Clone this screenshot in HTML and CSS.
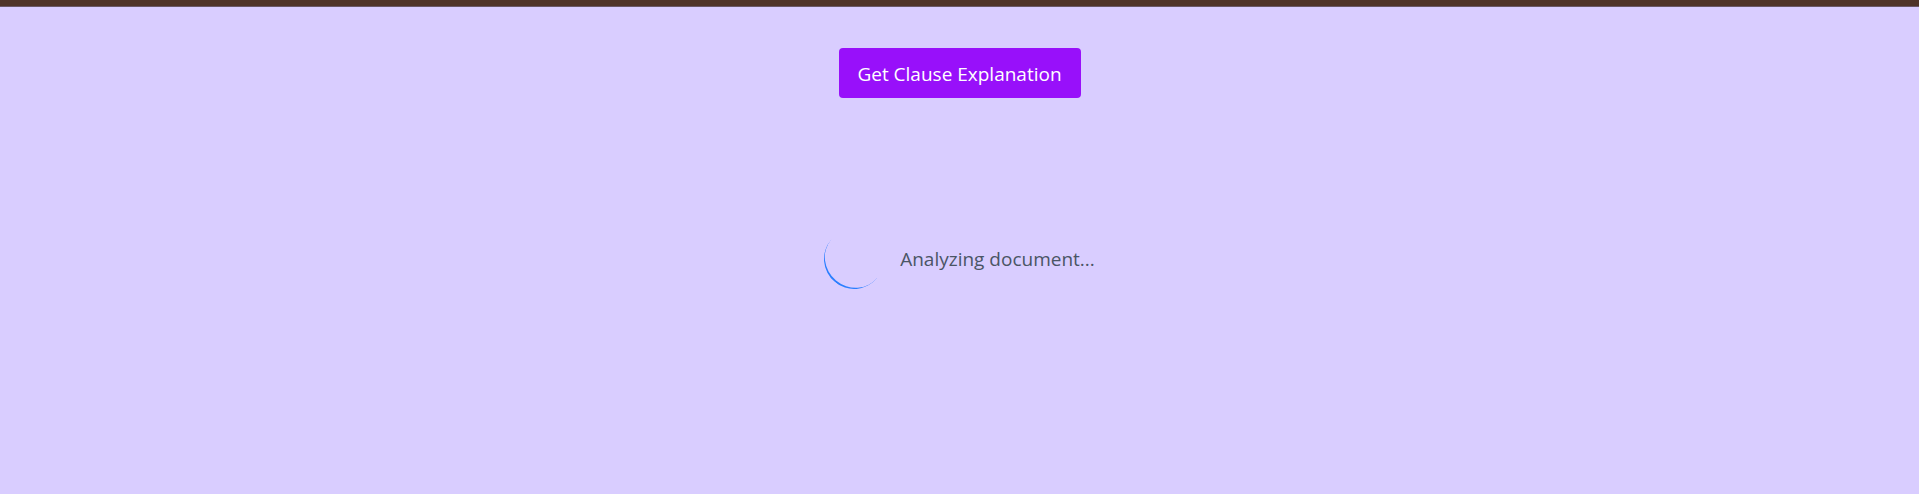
FILE: index.html
```html
<!DOCTYPE html>
<html lang="en">
<head>
<meta charset="utf-8">
<title>Clause Explanation</title>
<link rel="stylesheet" href="styles.css">
</head>
<body>
  <div class="topbar"></div>
  <main class="main">
    <div class="actions">
      <button class="btn-primary" type="button">Get Clause Explanation</button>
    </div>
    <div class="loading">
      <div class="spinner"></div>
      <span class="loading-text">Analyzing document...</span>
    </div>
  </main>
</body>
</html>
```

FILE: styles.css
```css
html, body {
  margin: 0;
  padding: 0;
}
body {
  background: #d9cdff;
  font-family: "Open Sans", "Noto Sans", sans-serif;
  height: 494px;
  overflow: hidden;
}
.topbar {
  height: 6px;
  background: #4f3428;
  border-bottom: 1px solid #6a5866;
}
.main {
  padding-top: 41px;
}
.actions {
  display: flex;
  justify-content: center;
}
.btn-primary {
  background: #9810fa;
  color: #ffffff;
  border: none;
  border-radius: 4px;
  font-family: "Open Sans", "Noto Sans", sans-serif;
  font-size: 19px;
  line-height: 26px;
  padding: 13px 0 11px;
  width: 242px;
  height: 50px;
  white-space: nowrap;
  text-align: center;
  cursor: pointer;
}
.loading {
  display: flex;
  align-items: center;
  justify-content: center;
  gap: 16px;
  padding-top: 131px;
}
.spinner {
  width: 60px;
  height: 60px;
  box-sizing: border-box;
  border-radius: 50%;
  border-bottom: 2px solid #2b7fff;
  transform: rotate(40deg);
}
.loading-text {
  font-size: 19px;
  color: #4a5565;
  line-height: 28px;
  white-space: nowrap;
}
```
